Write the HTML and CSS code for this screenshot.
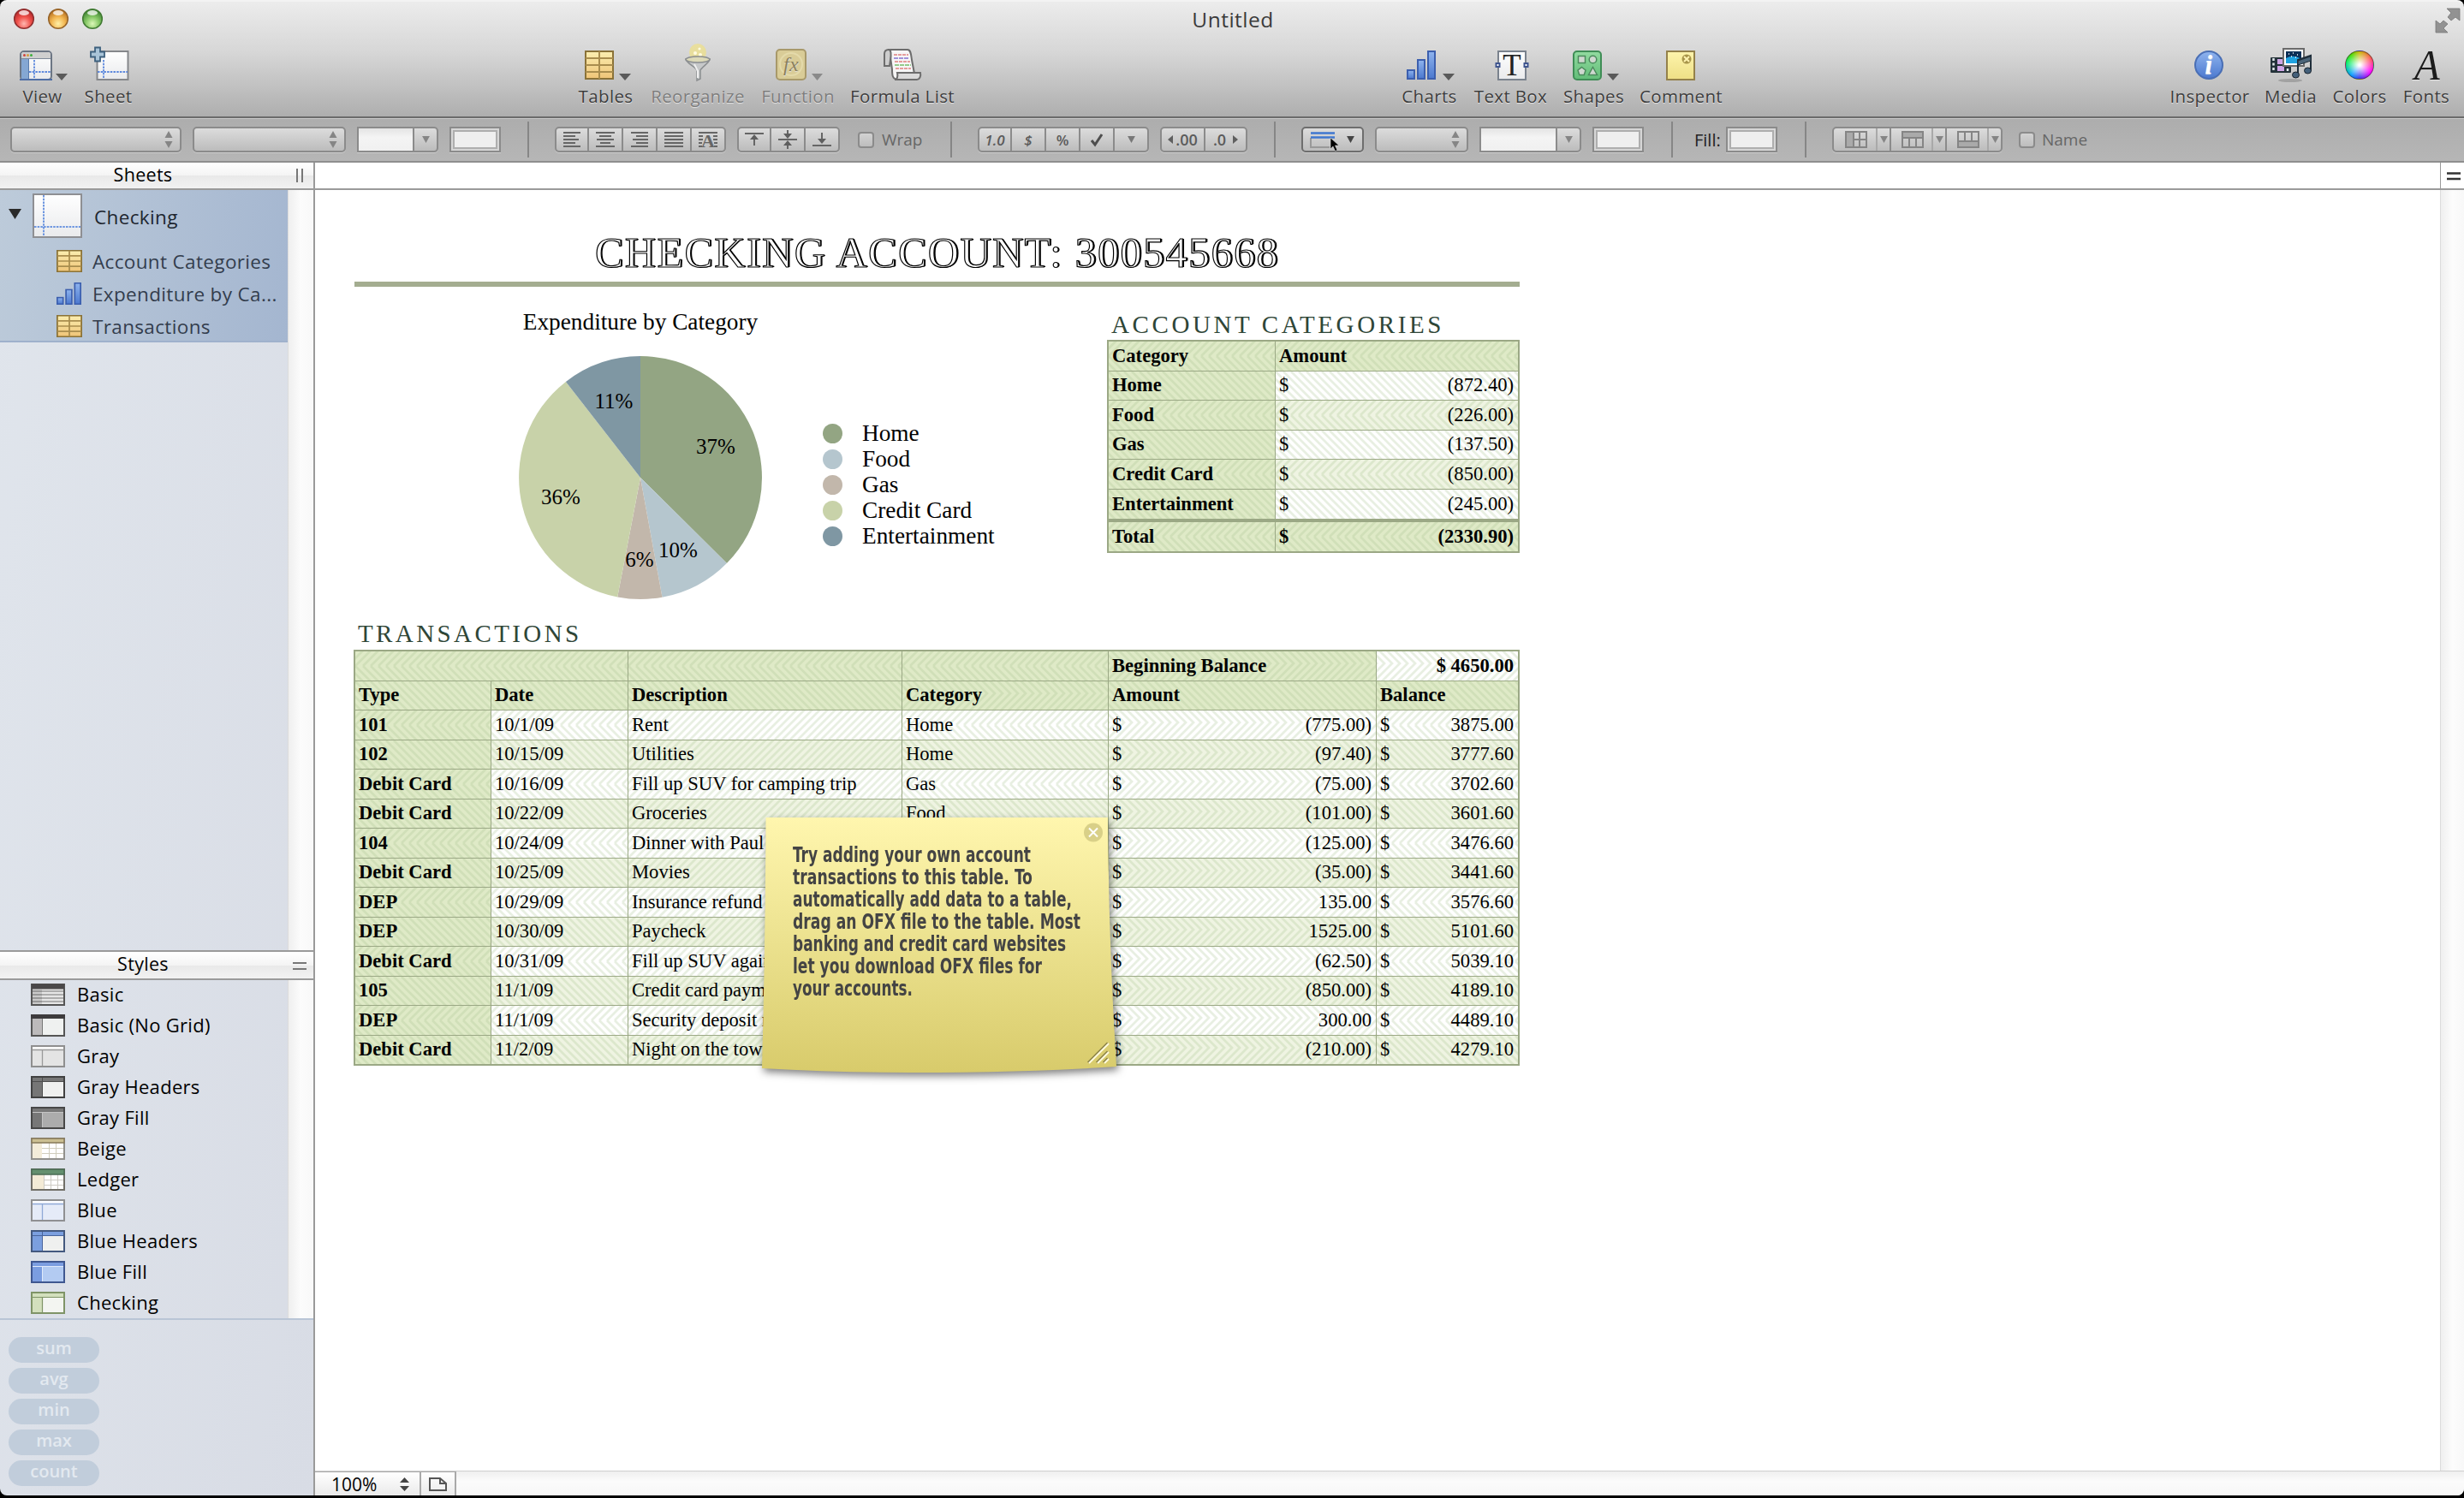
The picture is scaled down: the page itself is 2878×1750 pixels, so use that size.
FILE: index.html
```html
<!DOCTYPE html>
<html lang="en">
<head>
<meta charset="utf-8">
<title>Untitled</title>
<link rel="stylesheet" href="styles.css">
</head>
<body>
<svg class="defs" width="0" height="0" aria-hidden="true">
  <defs>
    <linearGradient id="gold" x1="0" y1="0" x2="0" y2="1"><stop offset="0" stop-color="#fbeeb0"/><stop offset="1" stop-color="#efc477"/></linearGradient>
    <linearGradient id="blue" x1="0" y1="0" x2="0" y2="1"><stop offset="0" stop-color="#8fb4ee"/><stop offset="1" stop-color="#4b78cf"/></linearGradient>
    <linearGradient id="green" x1="0" y1="0" x2="0" y2="1"><stop offset="0" stop-color="#92dba0"/><stop offset="1" stop-color="#62bd78"/></linearGradient>
    <linearGradient id="paper" x1="0" y1="0" x2="0" y2="1"><stop offset="0" stop-color="#ffffff"/><stop offset="1" stop-color="#e9eaec"/></linearGradient>
    <linearGradient id="noteIcon" x1="0" y1="0" x2="0" y2="1"><stop offset="0" stop-color="#fdf4ac"/><stop offset="1" stop-color="#eedf85"/></linearGradient>
    <linearGradient id="noteFill" x1="0" y1="0" x2="0" y2="1"><stop offset="0" stop-color="#fff6ae"/><stop offset=".45" stop-color="#ede391"/><stop offset="1" stop-color="#d8cb6b"/></linearGradient>
    <radialGradient id="red" cx=".5" cy=".75" r=".7"><stop offset="0" stop-color="#ffb7b0"/><stop offset=".5" stop-color="#f0524c"/><stop offset="1" stop-color="#b3272a"/></radialGradient>
    <radialGradient id="amber" cx=".5" cy=".75" r=".7"><stop offset="0" stop-color="#fff0a8"/><stop offset=".5" stop-color="#f2b651"/><stop offset="1" stop-color="#b8701f"/></radialGradient>
    <radialGradient id="lime" cx=".5" cy=".75" r=".7"><stop offset="0" stop-color="#dcf7b8"/><stop offset=".5" stop-color="#86c866"/><stop offset="1" stop-color="#3f8433"/></radialGradient>
    <symbol id="table" viewBox="0 0 34 34" preserveAspectRatio="none">
      <rect x="1" y="1" width="32" height="32" fill="url(#gold)" stroke="#8a7238" stroke-width="2"/>
      <path d="M17 1v32M1 9h32M1 17h32M1 25h32" stroke="#a98d4e" stroke-width="2"/>
    </symbol>
    <symbol id="bars" viewBox="0 0 34 34" preserveAspectRatio="none">
      <g fill="url(#blue)" stroke="#3c5fae" stroke-width="2"><rect x="1" y="23" width="8" height="10"/><rect x="13" y="11" width="8" height="22"/><rect x="25" y="1" width="8" height="32"/></g>
    </symbol>
    <symbol id="updown" viewBox="0 0 10 22"><path d="M5 1l4.5 8h-9zM5 21l4.5-8h-9z"/></symbol>
    <symbol id="down" viewBox="0 0 10 9"><path d="M0 0h10l-5 9z"/></symbol>
  </defs>
</svg>

<div class="window">
  <header class="chrome">
    <div class="titlebar">
      <svg class="lights" width="112" height="28" viewBox="0 0 112 28">
        <g stroke-width="1.5"><circle cx="16" cy="13" r="11.3" fill="url(#red)" stroke="#8f2f2f"/><circle cx="56" cy="13" r="11.3" fill="url(#amber)" stroke="#96642a"/><circle cx="96" cy="13" r="11.3" fill="url(#lime)" stroke="#417a33"/></g>
        <g fill="#fff" opacity=".75"><ellipse cx="16" cy="6" rx="6" ry="3"/><ellipse cx="56" cy="6" rx="6" ry="3"/><ellipse cx="96" cy="6" rx="6" ry="3"/></g>
      </svg>
      <div class="window-title">Untitled</div>
      <svg class="fullscreen" width="30" height="30" viewBox="0 0 30 30" fill="#929292"><path d="M14 1h15v14l-5-4-5 4-4-4 4-5zM1 15l5 4 4-4 5 4-5 5 5 5H1z" stroke="#777" stroke-width=".8"/></svg>
    </div>
    <nav class="toolbar">
      <div class="tools tools-file">
        <div class="tool w46">
          <svg width="46" height="48" viewBox="0 0 46 48"><rect x="-2" y="10" width="36" height="33" rx="4" fill="url(#paper)" stroke="#6c7684" stroke-width="2"/><path d="M-1 18v-4a3 3 0 0 1 3-3h28a3 3 0 0 1 3 3v4z" fill="#cfcfcf"/><path d="M-1 18.500h34" stroke="#7f8a99"/><circle cx="2.500" cy="14.500" r="1.500" fill="#d3443c"/><circle cx="6.500" cy="14.500" r="1.500" fill="#d39c3c"/><circle cx="10.500" cy="14.500" r="1.500" fill="#3caf3c"/><rect x="-1" y="19" width="8" height="23" fill="#84a7d3"/><path d="M7.500 19v23" stroke="#5a7bab"/><path d="M14 20v22M8 34h25" stroke="#5f8add" stroke-width="1.800" stroke-dasharray="2.500 1.200"/><path d="M-3 43h38" stroke="#4f6ea5" stroke-width="2"/><path d="M39 36h14l-7 8z" fill="#5a5a5a"/></svg>
          <span>View</span>
        </div>
        <div class="tool w52">
          <svg width="52" height="48" viewBox="0 0 52 48"><rect x="13.500" y="10" width="36" height="33" fill="url(#paper)" stroke="#85878b" stroke-width="2"/><path d="M21 20v22M14 34h35" stroke="#5f8add" stroke-width="1.800" stroke-dasharray="2.500 1.200"/><path d="M11 5.500h6v5h5v6h-5v5h-6v-5H6v-6h5z" fill="#a9c4d8" stroke="#3e617e" stroke-width="1.800"/></svg>
          <span>Sheet</span>
        </div>
      </div>
      <div class="tools tools-edit">
        <div class="tool w62">
          <svg width="62" height="48" viewBox="0 0 62 48"><use href="#table" x="7" y="9" width="34" height="34"/><path d="M47 36h14l-7 8z" fill="#5a5a5a"/></svg>
          <span>Tables</span>
        </div>
        <div class="tool w108 off">
          <svg width="108" height="48" viewBox="0 0 108 48"><ellipse cx="54" cy="11" rx="10" ry="10" fill="#eee08a" opacity=".75"/><g fill="#fffbe0"><circle cx="51" cy="12" r="2"/><circle cx="56" cy="7" r="1.600"/><circle cx="57" cy="14" r="2"/></g><path d="M40 19h28c-1 5-9 9-11 13v10l-4 2V32c-2-4-12-8-13-13z" fill="#c6c8c9" stroke="#8b8e90" stroke-width="1.500"/><ellipse cx="54" cy="19.500" rx="14" ry="3.500" fill="#dcd9b8" stroke="#8b8e90" stroke-width="1.500"/><path d="M50 25l4 8v8" stroke="#efefef" stroke-width="2" fill="none"/></svg>
          <span>Reorganize</span>
        </div>
        <div class="tool w81 off">
          <svg width="81" height="48" viewBox="0 0 81 48"><rect x="16" y="8" width="34" height="35" rx="4" fill="#d9cc97" stroke="#a8996a" stroke-width="2"/><ellipse cx="33" cy="25" rx="13" ry="13" fill="none" stroke="#e4daaa" stroke-width="2"/><text x="33" y="33" text-anchor="middle" class="fx">fx</text><path d="M57 36h13l-6.500 8z" fill="#8a8a8a"/></svg>
          <span>Function</span>
        </div>
        <div class="tool w118">
          <svg width="118" height="48" viewBox="0 0 118 48"><path d="M43 8h22c4 0 4 6 5 12l3 16-3 7H54c-7 0-7-6-7-12l-2-14z" fill="#f6f6f6" stroke="#6d6d6d" stroke-width="2"/><path d="M44 27h-6V13c0-4 3-5 5-5 3 0 3 6 2 12z" fill="#cdcdcd" stroke="#6d6d6d" stroke-width="2"/><path d="M53 35h27c1 4-1 8-4 8H50c3 0 4-4 3-8z" fill="#dadada" stroke="#6d6d6d" stroke-width="2"/><path d="M49 14h17M50 22h18M51 30h18" stroke="#e08080" stroke-width="1.600" stroke-dasharray="4 1"/><path d="M49 18h18" stroke="#8573cf" stroke-width="1.600" stroke-dasharray="5 1"/><path d="M50 26h19" stroke="#74bd6a" stroke-width="1.600" stroke-dasharray="5 1"/></svg>
          <span>Formula List</span>
        </div>
      </div>
      <div class="tools tools-insert">
        <div class="tool w62">
          <svg width="62" height="48" viewBox="0 0 62 48"><use href="#bars" x="5" y="9" width="34" height="34"/><path d="M47 36h14l-7 8z" fill="#5a5a5a"/></svg>
          <span>Charts</span>
        </div>
        <div class="tool w84">
          <svg width="84" height="48" viewBox="0 0 84 48"><rect x="28" y="10" width="32" height="33" fill="url(#paper)" stroke="#7a828d" stroke-width="2"/><text x="44" y="38" text-anchor="middle" class="big-t">T</text><g fill="#fff" stroke="#3f558f" stroke-width="2"><rect x="25.500" y="24" width="4" height="4"/><rect x="58.500" y="24" width="4" height="4"/></g></svg>
          <span>Text Box</span>
        </div>
        <div class="tool w66">
          <svg width="66" height="48" viewBox="0 0 66 48"><rect x="10" y="10" width="32" height="33" rx="4" fill="url(#green)" stroke="#3f8d56" stroke-width="2"/><g fill="#cfd8d0" stroke="#4b8a5c" stroke-width="1.500"><rect x="15.500" y="15.500" width="8" height="8"/><circle cx="32.500" cy="19.500" r="4.300"/><path d="M19.500 28.500l4.500 3.500-1.700 5.500h-5.600L15 32zM32.500 28.500l5 9h-10z"/></g><path d="M49 36h14l-7 8z" fill="#5a5a5a"/></svg>
          <span>Shapes</span>
        </div>
        <div class="tool w94">
          <svg width="94" height="48" viewBox="0 0 94 48"><rect x="31" y="10" width="32" height="33" fill="url(#noteIcon)" stroke="#94814a" stroke-width="2"/><circle cx="54" cy="19" r="5.500" fill="#a8954a"/><path d="M51 16l6 6M57 16l-6 6" stroke="#fff3b0" stroke-width="2"/></svg>
          <span>Comment</span>
        </div>
      </div>
      <div class="tools tools-panels">
        <div class="tool w89">
          <svg width="89" height="48" viewBox="0 0 89 48"><circle cx="44" cy="26" r="16" fill="url(#blue)" stroke="#4a6fb5" stroke-width="2"/><text x="44" y="36" text-anchor="middle" class="info">i</text></svg>
          <span>Inspector</span>
        </div>
        <div class="tool w56">
          <svg width="56" height="48" viewBox="0 0 56 48"><ellipse cx="28" cy="44" rx="14" ry="2" fill="#8b8b8b" opacity=".6"/><rect x="5" y="17" width="24" height="18" rx="1" fill="#24323a"/><path d="M8.500 18v16M25 30v4" stroke="#dfe7ea" stroke-width="2.500" stroke-dasharray="3 2.500"/><path d="M13 19h8v6h-8zM13 27h8v6h-8z" fill="#cfa6e6"/><rect x="20" y="7" width="24" height="20" fill="#fff" stroke="#6b6b6b" stroke-width="2"/><rect x="23" y="10" width="18" height="14" fill="#0c2f57"/><path d="M23 18q9-5 18 1v5H23z" fill="#20a3e0"/><path d="M26 13h1M31 12h1M36 14h1M29 16h1M34 17h1" stroke="#fff" stroke-width="1.500"/><path d="M37 38V20l15-5v18" fill="none" stroke="#1f2d39" stroke-width="2"/><path d="M37 21l15-5v5l-15 5z" fill="#4b6478" stroke="#1f2d39"/><ellipse cx="34.500" cy="37.500" rx="4" ry="3.500" fill="#44607a" stroke="#16212b"/><ellipse cx="48.500" cy="32.500" rx="4" ry="3.500" fill="#44607a" stroke="#16212b"/></svg>
          <span>Media</span>
        </div>
        <div class="tool w61">
          <i class="wheel"></i>
          <span>Colors</span>
        </div>
        <div class="tool w51">
          <svg width="51" height="48" viewBox="0 0 51 48"><text x="12" y="43" textLength="30" lengthAdjust="spacingAndGlyphs" class="big-a">A</text></svg>
          <span>Fonts</span>
        </div>
      </div>
    </nav>
  </header>

  <div class="formatbar">
    <div class="fgroup g1">
      <div class="popup p199"><svg width="10" height="22"><use href="#updown"/></svg></div>
      <div class="popup p179"><svg width="10" height="22"><use href="#updown"/></svg></div>
      <div class="combo p95"><b></b><em><svg width="9" height="8"><use href="#down"/></svg></em></div>
      <div class="well"></div>
    </div>
    <div class="fgroup g2">
      <div class="seg">
        <i><svg width="24" height="22"><path d="M2 3h20M2 7h14M2 11h18M2 15h14M2 19h20"/></svg></i>
        <i><svg width="24" height="22"><path d="M1 3h22M5 7h14M2 11h20M6 15h12M1 19h22"/></svg></i>
        <i><svg width="24" height="22"><path d="M2 3h20M8 7h14M4 11h18M8 15h14M2 19h20"/></svg></i>
        <i><svg width="24" height="22"><path d="M1 3h22M1 7h22M1 11h22M1 15h22M1 19h22"/></svg></i>
        <i><svg width="24" height="22"><path d="M1 3h22M1 7h5M18 7h5M1 11h5M18 11h5M1 15h4M19 15h4M1 19h4M19 19h4"/><text x="12" y="20" text-anchor="middle">A</text></svg></i>
      </div>
      <div class="seg">
        <i><svg width="24" height="22"><path d="M1 4h22M12 18v-9"/><path class="f" d="M12 5l5 6h-10z"/></svg></i>
        <i><svg width="24" height="22"><path d="M1 11h22M12 0v6M12 22v-6"/><path class="f" d="M12 10l5-6h-10zM12 12l5 6h-10z"/></svg></i>
        <i><svg width="24" height="22"><path d="M1 18h22M12 3v8"/><path class="f" d="M12 16l5-6h-10z"/></svg></i>
      </div>
      <label class="check"><i></i>Wrap</label>
    </div>
    <div class="fgroup g3">
      <div class="seg glyphs">
        <i class="it">1.0</i><i class="it">$</i><i>%</i><i><svg width="18" height="18"><path class="k" d="M3 10l4 5 8-12"/></svg></i><i><svg width="9" height="8"><use href="#down"/></svg></i>
      </div>
      <div class="seg glyphs wide">
        <i><svg width="6" height="10"><path class="f" d="M6 0v10l-6-5z"/></svg>.00</i><i>.0<svg class="r" width="6" height="10"><path class="f" d="M0 0v10l6-5z"/></svg></i>
      </div>
    </div>
    <div class="fgroup g4">
      <div class="popup live"><svg width="30" height="20"><path d="M1 8v11h22" stroke="#999" stroke-width="2" fill="none"/><path d="M1 2.500h28M1 7.500h28" stroke="#3f77cf" stroke-width="2.600"/></svg><svg class="tri" width="9" height="8"><use href="#down"/></svg>
        <svg class="cursor" width="12" height="16" viewBox="0 0 12 16"><path d="M1 0v13l3-3 2.500 5.500 2.500-1L6.500 9H11z" fill="#000" stroke="#ddd" stroke-width=".6"/></svg></div>
      <div class="popup p109"><svg width="10" height="22"><use href="#updown"/></svg></div>
      <div class="combo p119"><b></b><em><svg width="9" height="8"><use href="#down"/></svg></em></div>
      <div class="well"></div>
    </div>
    <div class="fgroup g5"><span class="fill-label">Fill:</span><div class="well"></div></div>
    <div class="fgroup g6">
      <div class="seg tables">
        <i><svg width="26" height="20"><path class="g" d="M1 1h9v18H1z"/><path d="M1 1h24v18H1zM10 1v18M17 1v18M10 10h15"/></svg></i><u><svg width="9" height="8"><use href="#down"/></svg></u>
        <i><svg width="26" height="20"><path class="g" d="M1 1h24v7H1z"/><path d="M1 1h24v18H1zM1 8h24M9 8v11M17 8v11"/></svg></i><u><svg width="9" height="8"><use href="#down"/></svg></u>
        <i><svg width="26" height="20"><path class="g" d="M1 12h24v7H1z"/><path d="M1 1h24v18H1zM1 12h24M9 1v11M17 1v11"/></svg></i><u><svg width="9" height="8"><use href="#down"/></svg></u>
      </div>
      <label class="check name"><i></i>Name</label>
    </div>
  </div>

  <div class="content">
    <aside class="sidebar">
      <div class="pane-head">Sheets<svg class="grip" width="8" height="16"><path d="M1 0v16M7 0v16"/></svg></div>
      <div class="pane sheets">
        <div class="list">
          <ul class="tree">
            <li class="root"><svg width="110" height="66" viewBox="0 0 110 66"><path d="M10 24h15l-7.500 12z" fill="#2a2a2a"/><rect x="39" y="7" width="56" height="50" fill="url(#paper)" stroke="#8e8f93" stroke-width="2"/><path d="M51 8v48M40 45h54" stroke="#6f97e0" stroke-width="2" stroke-dasharray="2.500 1.200"/></svg>Checking</li>
            <li><svg width="30" height="26"><use href="#table" width="30" height="26"/></svg>Account Categories</li>
            <li><svg width="30" height="26"><use href="#bars" width="29" height="26"/></svg>Expenditure by Ca...</li>
            <li><svg width="30" height="26"><use href="#table" width="30" height="26"/></svg>Transactions</li>
          </ul>
        </div>
        <div class="vscroll"></div>
      </div>
      <div class="pane-head second">Styles<svg class="grip" width="16" height="9"><path d="M0 1h16M0 8h16"/></svg></div>
      <div class="pane styles">
        <ul class="list stylelist">
          <li><svg width="40" height="26"><rect x="1" y="1" width="38" height="24" fill="#e6e6e6" stroke="#555" stroke-width="2"/><path d="M1 3.500h38" stroke="#4a4849" stroke-width="6"/><path d="M2 9h36M2 13h36M2 17h36M2 21h36" stroke="#9b9b9b" stroke-width="1.500"/><path d="M2 7h11v17H2z" fill="#000" opacity=".12"/></svg>Basic</li>
          <li><svg width="40" height="26"><rect x="1" y="1" width="38" height="24" fill="#eff1f0" stroke="#555" stroke-width="2"/><path d="M2 5h11v19H2z" fill="#bcbabb"/><path d="M13.500 5v19" stroke="#777"/><path d="M0 2.500h40" stroke="#3d3b3d" stroke-width="5"/></svg>Basic (No Grid)</li>
          <li><svg width="40" height="26"><rect x="1" y="1" width="38" height="24" fill="#e4e4e4" stroke="#8f8f8f" stroke-width="2"/><path d="M2 2h36v3H2z" fill="#fafafa"/><path d="M2 5.500h36M13.500 5v19" stroke="#9a9a9a" stroke-width="1.300"/></svg>Gray</li>
          <li><svg width="40" height="26"><rect x="1" y="1" width="38" height="24" fill="#eff0ef" stroke="#414141" stroke-width="2"/><path d="M2 2h36v5H13v17H2z" fill="#767676"/><path d="M2 6.500h36M13.500 2v22" stroke="#4d4d4d" stroke-width="1"/></svg>Gray Headers</li>
          <li><svg width="40" height="26"><rect x="1" y="1" width="38" height="24" fill="#acacac" stroke="#474747" stroke-width="2"/><path d="M2 2h36v4H13v18H2z" fill="#777"/><path d="M2 6.500h36M13.500 6v18" stroke="#c4c4c4" stroke-width="1"/></svg>Gray Fill</li>
          <li><svg width="40" height="26"><rect x="1" y="1" width="38" height="24" fill="#fff" stroke="#91908c" stroke-width="2"/><path d="M2 6h11v18H2z" fill="#f3ecd9"/><path d="M13 12.500h25M13 18.500h25M21.500 6v18M29.500 6v18" stroke="#d0cdbd" stroke-width="1"/><path d="M1 1h38v5H1z" fill="#cbbf92" stroke="#87795a" stroke-width="1.500"/></svg>Beige</li>
          <li><svg width="40" height="26"><rect x="1" y="1" width="38" height="24" fill="#fff" stroke="#716f68" stroke-width="2"/><path d="M2 7h13v17H2z" fill="#f3ebd6"/><path d="M15 13.500h23M15 19.500h23M15.500 7v17M23.500 7v17M31.500 7v17" stroke="#cdcbc4" stroke-width="1"/><path d="M1 1h38v6H1z" fill="#64906f" stroke="#4a6b54" stroke-width="1.500"/></svg>Ledger</li>
          <li><svg width="40" height="26"><rect x="1" y="1" width="38" height="24" fill="#e5ebf8" stroke="#8f9092" stroke-width="2"/><path d="M2 2h36v3H2z" fill="#fafcff"/><path d="M2 5.500h36M13.500 5v19" stroke="#8fa9d6" stroke-width="1.300"/></svg>Blue</li>
          <li><svg width="40" height="26"><rect x="1" y="1" width="38" height="24" fill="#eff0ef" stroke="#44597f" stroke-width="2"/><path d="M2 2h36v5H13v17H2z" fill="#7b9fdf"/><path d="M2 6.500h36M13.500 2v22" stroke="#49659c" stroke-width="1"/></svg>Blue Headers</li>
          <li><svg width="40" height="26"><rect x="1" y="1" width="38" height="24" fill="#b3cbf2" stroke="#3f5790" stroke-width="2"/><path d="M2 2h36v4H13v18H2z" fill="#7b9de0"/><path d="M2 6.500h36M13.500 6v18" stroke="#e0eafb" stroke-width="1"/></svg>Blue Fill</li>
          <li><svg width="40" height="26"><rect x="1" y="1" width="38" height="24" fill="#f3f5f1" stroke="#7f9467" stroke-width="2"/><path d="M2 2h36v5H13v17H2z" fill="#d3e0bd"/><path d="M2 6.500h36M13.500 7v17" stroke="#7f9467" stroke-width="1.200"/></svg>Checking</li>
        </ul>
        <div class="vscroll"></div>
      </div>
      <div class="functions"><span>sum</span><span>avg</span><span>min</span><span>max</span><span>count</span></div>
    </aside>

    <main class="editor">
      <div class="ruler"><div class="splitter"><svg width="16" height="10"><path d="M0 1.500h16M0 8h16"/></svg></div></div>
      <div class="viewport">
        <article class="canvas">
          <h1>CHECKING ACCOUNT: 300545668</h1>
          <div class="overview">
            <figure class="chart">
              <div class="pie">
                <figcaption>Expenditure by Category</figcaption>
                <svg width="284" height="284" viewBox="-142 -142 284 284">
                  <path fill="#93a583" d="M0 0V-142A142 142 0 0 1 100.900 99.900z"/>
                  <path fill="#b5c6ce" d="M0 0L100.900 99.900A142 142 0 0 1 25.500 139.700z"/>
                  <path fill="#c2b7ab" d="M0 0L25.500 139.700A142 142 0 0 1-26.800 139.400z"/>
                  <path fill="#c8d2a9" d="M0 0L-26.800 139.400A142 142 0 0 1-87.100-112.100z"/>
                  <path fill="#7f97a3" d="M0 0L-87.100-112.100A142 142 0 0 1 0-142z"/>
                  <g text-anchor="middle"><text x="88" y="-28">37%</text><text x="44" y="93">10%</text><text x="-1" y="104">6%</text><text x="-93" y="31">36%</text><text x="-31" y="-81">11%</text></g>
                </svg>
              </div>
              <ul class="legend"><li class="home">Home</li><li class="food">Food</li><li class="gas">Gas</li><li class="credit">Credit Card</li><li class="fun">Entertainment</li></ul>
            </figure>
            <section>
              <h2>ACCOUNT CATEGORIES</h2>
              <table class="accounts">
                <colgroup><col class="c195"><col class="c283"></colgroup>
                <tr><th>Category</th><th>Amount</th></tr>
                <tr><th>Home</th><td><p>$<span>(872.40)</span></p></td></tr>
                <tr><th>Food</th><td><p>$<span>(226.00)</span></p></td></tr>
                <tr><th>Gas</th><td><p>$<span>(137.50)</span></p></td></tr>
                <tr><th>Credit Card</th><td><p>$<span>(850.00)</span></p></td></tr>
                <tr><th>Entertainment</th><td><p>$<span>(245.00)</span></p></td></tr>
                <tr class="total"><th>Total</th><th><p>$<span>(2330.90)</span></p></th></tr>
              </table>
            </section>
          </div>
          <h2 class="tx">TRANSACTIONS</h2>
          <table class="transactions">
            <colgroup><col class="c159"><col class="c160"><col class="c320"><col class="c241"><col class="c313"><col class="c166"></colgroup>
            <tr><th colspan="2"></th><th></th><th></th><th>Beginning Balance</th><td class="start">$ 4650.00</td></tr>
            <tr><th>Type</th><th>Date</th><th>Description</th><th>Category</th><th>Amount</th><th>Balance</th></tr>
            <tr><th>101</th><td>10/1/09</td><td>Rent</td><td>Home</td><td><p>$<span>(775.00)</span></p></td><td><p>$<span>3875.00</span></p></td></tr>
            <tr><th>102</th><td>10/15/09</td><td>Utilities</td><td>Home</td><td><p>$<span>(97.40)</span></p></td><td><p>$<span>3777.60</span></p></td></tr>
            <tr><th>Debit Card</th><td>10/16/09</td><td>Fill up SUV for camping trip</td><td>Gas</td><td><p>$<span>(75.00)</span></p></td><td><p>$<span>3702.60</span></p></td></tr>
            <tr><th>Debit Card</th><td>10/22/09</td><td>Groceries</td><td>Food</td><td><p>$<span>(101.00)</span></p></td><td><p>$<span>3601.60</span></p></td></tr>
            <tr><th>104</th><td>10/24/09</td><td>Dinner with Paul</td><td></td><td><p>$<span>(125.00)</span></p></td><td><p>$<span>3476.60</span></p></td></tr>
            <tr><th>Debit Card</th><td>10/25/09</td><td>Movies</td><td></td><td><p>$<span>(35.00)</span></p></td><td><p>$<span>3441.60</span></p></td></tr>
            <tr><th>DEP</th><td>10/29/09</td><td>Insurance refund</td><td></td><td><p>$<span>135.00</span></p></td><td><p>$<span>3576.60</span></p></td></tr>
            <tr><th>DEP</th><td>10/30/09</td><td>Paycheck</td><td></td><td><p>$<span>1525.00</span></p></td><td><p>$<span>5101.60</span></p></td></tr>
            <tr><th>Debit Card</th><td>10/31/09</td><td>Fill up SUV again</td><td></td><td><p>$<span>(62.50)</span></p></td><td><p>$<span>5039.10</span></p></td></tr>
            <tr><th>105</th><td>11/1/09</td><td>Credit card payment</td><td></td><td><p>$<span>(850.00)</span></p></td><td><p>$<span>4189.10</span></p></td></tr>
            <tr><th>DEP</th><td>11/1/09</td><td>Security deposit refund</td><td></td><td><p>$<span>300.00</span></p></td><td><p>$<span>4489.10</span></p></td></tr>
            <tr><th>Debit Card</th><td>11/2/09</td><td>Night on the town</td><td></td><td><p>$<span>(210.00)</span></p></td><td><p>$<span>4279.10</span></p></td></tr>
          </table>
          <svg class="note" width="416" height="302" viewBox="0 0 416 302">
            <path d="M4.500 0H404q1 150 10 291-100 7-240 7-90 0-174-5 4-150 4.500-293z" fill="url(#noteFill)"/>
            <circle cx="387" cy="17.500" r="11" fill="#d9d088"/><path d="M382 12.500l10 10M392 12.500l-10 10" stroke="#fff" stroke-width="2"/>
            <g>
              <text x="36" y="52" textLength="278" lengthAdjust="spacingAndGlyphs">Try adding your own account</text>
              <text x="36" y="78" textLength="280" lengthAdjust="spacingAndGlyphs">transactions to this table. To</text>
              <text x="36" y="104" textLength="326" lengthAdjust="spacingAndGlyphs">automatically add data to a table,</text>
              <text x="36" y="130" textLength="336" lengthAdjust="spacingAndGlyphs">drag an OFX file to the table. Most</text>
              <text x="36" y="156" textLength="319" lengthAdjust="spacingAndGlyphs">banking and credit card websites</text>
              <text x="36" y="182" textLength="291" lengthAdjust="spacingAndGlyphs">let you download OFX files for</text>
              <text x="36" y="208" textLength="140" lengthAdjust="spacingAndGlyphs">your accounts.</text>
            </g>
            <path d="M382 287l23-23M392 287l13-13M400 287l5-5" stroke="#fffbe2" stroke-width="2"/><path d="M380.500 286l23-23M390.500 286l13-13M398.500 286l5-5" stroke="#8b834b" stroke-width="1.500"/>
          </svg>
        </article>
        <div class="vscroll page"></div>
      </div>
      <footer class="status">
        <div class="zoom"><span>100%</span><svg width="11" height="16" viewBox="0 0 11 16"><path d="M5.500 0l5.500 6H0zM5.500 16l5.500-6H0z"/></svg></div>
        <div class="pageview"><svg width="21" height="16" viewBox="0 0 21 16"><path d="M1 1h12l7 6v8H1zM13 1v6h7" fill="none" stroke="#555" stroke-width="2"/></svg></div>
        <div class="hscroll"></div>
      </footer>
    </main>
  </div>
</div>
</body>
</html>
```

FILE: styles.css
```css
* { box-sizing: border-box; }
body { margin: 0; background: #000; font-family: "Open Sans", "Noto Sans", sans-serif; font-size: 22px; color: #000; }
ul, p, h1, h2, figure { margin: 0; padding: 0; list-style: none; }
svg { display: block; flex: none; overflow: visible; }
.defs { position: absolute; }
.window { width: 2878px; height: 1750px; display: flex; flex-direction: column; padding-bottom: 3px; overflow: hidden; }

/* Title bar and toolbar */
.chrome { height: 138px; background: linear-gradient(#ececec, #d6d6d6 45%, #aeaeae); border-top: 2px solid #f3f3f3; border-bottom: 2px solid #6b6b6b; border-radius: 8px 8px 0 0; }
.titlebar { height: 48px; padding: 7px 4px 0 12px; display: flex; }
.window-title { flex: 1; padding-right: 88px; margin-top: -1px; font-size: 24.5px; line-height: 30px; letter-spacing: .5px; color: #3b3b3b; text-align: center; }
.toolbar { display: flex; height: 86px; }
.tools { display: flex; gap: 22px; }
.tools-file { gap: 28px; padding-left: 26px; width: 676px; }
.tools-edit { width: 962px; }
.tools-insert { width: 898px; }
.tool { display: flex; flex-direction: column; align-items: center; color: #3d3d3d; font-size: 20.5px; white-space: nowrap; text-shadow: 0 1px 1px #e6e6e6; letter-spacing: .35px; }
.tool span { line-height: 28px; padding-left: 1px; }
.tool.off { color: #7d7d7d; }
.w46 { width: 46px; } .w51 { width: 51px; } .w52 { width: 52px; } .w56 { width: 56px; } .w61 { width: 61px; } .w62 { width: 62px; } .w66 { width: 66px; }
.w81 { width: 81px; } .w84 { width: 84px; } .w89 { width: 89px; } .w94 { width: 94px; } .w108 { width: 109px; } .w118 { width: 119px; }
.fx { font: italic 24px "Liberation Serif", serif; fill: #8b805a; }
.big-t { font: 35px "Liberation Serif", serif; fill: #222; }
.info { font: italic bold 31px "Liberation Serif", serif; fill: #fff; }
.big-a { font: italic 51px "Liberation Serif", serif; fill: #1c1c1c; }
.wheel { width: 34px; height: 34px; margin: 9px 0 5px; border-radius: 50%; border: 1.5px solid rgba(60,40,40,.55); background: radial-gradient(circle, #fff 5%, rgba(255,255,255,0) 70%), conic-gradient(#c8b400, #f55 60deg, #f0f 120deg, #33e 180deg, #09f 220deg, #0e6 280deg, #4d0 320deg, #c8b400); }

/* Format bar */
.formatbar { height: 52px; display: flex; background: linear-gradient(#adadad, #b6b6b6); border-top: 1px solid #c9c9c9; border-bottom: 2px solid #8e8e8e; }
.fgroup { display: flex; gap: 13px; align-items: center; padding-bottom: 1px; }
.fgroup + .fgroup::before { content: ""; align-self: center; width: 2px; height: 42px; background: #868686; margin-right: 17px; }
.g1 { width: 616px; padding-left: 12px; }
.g2 { width: 494px; }
.g3 { width: 378px; }
.g4 { width: 464px; }
.g5 { width: 156px; }
.popup, .combo, .seg, .well { height: 30px; border: 2px solid #8b8b8b; border-radius: 5px; background: linear-gradient(#dcdcdc, #bcbcbc); box-shadow: 0 1px 0 #cdcdcd; display: flex; align-items: center; flex: none; }
.popup { justify-content: flex-end; padding-right: 8px; fill: #858585; }
.p199 { width: 200px; } .p179 { width: 179px; } .p95 { width: 95px; } .p109 { width: 109px; } .p119 { width: 119px; }
.combo { border-radius: 0 5px 5px 0; align-items: stretch; }
.combo b { flex: 1; background: linear-gradient(#e4e4e4, #f4f4f4 40%, #f0f0f0); }
.combo em { width: 28px; border-left: 2px solid #8b8b8b; display: flex; align-items: center; justify-content: center; fill: #858585; }
.well { width: 60px; border-radius: 0; background: #efefef; box-shadow: inset 0 0 0 2px #d6d6d6, inset 0 0 0 4px #aeaeae, 0 1px 0 #cdcdcd; }
.seg { align-items: stretch; overflow: hidden; }
.seg i { width: 40px; display: flex; align-items: center; justify-content: center; font-style: normal; color: #5b5b5b; fill: #777; }
.seg i:first-child { width: 36px; }
.seg i + i, .seg u + i { border-left: 2px solid #8b8b8b; }
.seg path { stroke: #666; stroke-width: 2; fill: none; }
.seg path.f { fill: #5f5f5f; stroke: none; }
.seg path.k { stroke: #4e4e4e; stroke-width: 3; }
.seg text { font: bold 22px "Liberation Serif", serif; fill: #666; }
.glyphs i { font-size: 17px; font-weight: 600; gap: 3px; }
.glyphs .it { font-style: italic; }
.glyphs.wide i, .glyphs.wide i:first-child { width: 49px; font-size: 18px; }
.glyphs.wide .r { margin-left: 5px; }
.g4 .live { width: 73px; border-color: #6e6e6e; fill: #444; justify-content: space-between; padding: 0 9px 0 8px; position: relative; }
.cursor { position: absolute; left: 31px; top: 11px; }
.check { display: flex; align-items: center; gap: 9px; font-size: 19px; color: #666; margin-left: 8px; }
.check.name { margin-left: 6px; gap: 8px; }
.check i { width: 19px; height: 19px; border: 2px solid #8b8b8b; border-radius: 4px; background: linear-gradient(#d2d2d2, #bdbdbd); }
.fill-label { font-size: 20px; color: #222; margin: 0 -11px 0 -5px; width: 35px; }
.seg.tables i, .seg.tables i:first-child { width: 49px; }
.seg.tables u { width: 16px; border-left: 2px solid #a9a9a9; display: flex; align-items: center; justify-content: center; fill: #858585; }
.seg.tables path { stroke: #858585; }
.seg.tables path.g { fill: #aaa; stroke: none; }
.seg use, .seg.tables u use { stroke-width: 0; }
.seg.tables i svg { margin-left: 2px; }

/* Sidebar */
.content { flex: 1; display: flex; min-height: 0; }
.sidebar { width: 368px; border-right: 2px solid #9a9a9a; display: flex; flex-direction: column; background: linear-gradient(100deg, #e0e5ec, #d8dce5); border-radius: 0 0 0 8px; overflow: hidden; }
.pane-head { height: 32px; padding-right: 32px; position: relative; text-align: center; font-size: 21.5px; line-height: 27px; letter-spacing: .3px; background: linear-gradient(#fff, #f4f4f4 50%, #e9e9e9 51%, #f2f2f2); border-bottom: 2px solid #9a9a9a; }
.pane-head.second { height: 35px; border-top: 2px solid #9a9a9a; line-height: 28px; }
.grip { position: absolute; right: 12px; top: 7px; stroke: #777; stroke-width: 2; }
.second .grip { right: 8px; top: 12px; }
.pane { display: flex; }
.sheets { height: 888px; }
.styles { height: 397px; border-bottom: 2px solid #b9c5d6; }
.list { width: 336px; }
.vscroll { width: 30px; border-left: 1px solid #dcdcdc; background: linear-gradient(90deg, #efefef, #fcfcfc 50%, #f8f8f8); }
.tree { height: 178px; background: linear-gradient(100deg, #bdcbda, #a4b6d0); border-bottom: 2px solid #9fb1cc; color: #333d4d; }
.tree li { display: flex; align-items: center; gap: 12px; height: 38px; padding-left: 66px; white-space: nowrap; font-size: 22.5px; letter-spacing: .35px; }
.tree .root { height: 64px; padding: 0 0 2px; gap: 0; color: #20262f; }
.stylelist li { display: flex; align-items: center; gap: 14px; height: 36px; padding: 0 0 4px 36px; font-size: 22px; letter-spacing: .3px; }
.stylelist li svg { margin-top: 1px; }
.functions { padding: 20px 0 0 10px; display: flex; flex-direction: column; gap: 6px; }
.functions span { width: 106px; height: 30px; border-radius: 15px; background: #c1cddb; color: #e3e9f0; font-size: 20px; font-weight: 600; line-height: 25px; text-align: center; }

/* Editor */
.editor { flex: 1; display: flex; flex-direction: column; background: #fff; min-width: 0; border-radius: 0 0 8px 0; overflow: hidden; }
.ruler { height: 32px; border-bottom: 2px solid #9a9a9a; display: flex; justify-content: flex-end; }
.splitter { width: 28px; border-left: 1px solid #9a9a9a; padding: 11px 0 0 7px; stroke: #333; stroke-width: 2.500; }
.viewport { flex: 1; display: flex; min-height: 0; }
.canvas { flex: 1; padding-left: 45px; position: relative; font-family: "Liberation Serif", serif; }
.vscroll.page { width: 28px; }
h1 { width: 1361px; margin-left: 1px; padding-top: 40px; height: 113px; line-height: 66px; font-size: 50px; font-weight: 400; letter-spacing: 1.5px; text-align: center; border-bottom: 6px solid #a4ad90; color: #fff; -webkit-text-stroke: 1.2px #000; text-shadow: 1.6px 0 0 #000; white-space: nowrap; }
h2 { font-size: 29px; font-weight: 400; letter-spacing: 3.6px; line-height: 36px; color: #2f4637; padding-left: 5px; margin-top: 26px; white-space: nowrap; }
h2.tx { margin: 0; line-height: 38px; letter-spacing: 3.4px; }
.overview { display: grid; grid-template-columns: 880px 482px; height: 386px; }
.chart { display: flex; font-size: 27.3px; }
.pie { margin: 26px 0 0 193px; width: 284px; }
figcaption { line-height: 30px; margin-bottom: 25px; text-align: center; white-space: nowrap; }
.pie text { font-size: 25px; }
.legend { margin: 156px 0 0 71px; }
.legend li { display: flex; align-items: center; gap: 23px; height: 30.1px; line-height: 30px; white-space: nowrap; }
.legend li::before { content: ""; width: 23px; height: 23px; border-radius: 50%; background: var(--c); }
.home { --c: #93a583; } .food { --c: #b5c6ce; } .gas { --c: #c2b7ab; } .credit { --c: #c8d2a9; } .fun { --c: #7f97a3; }

table { border: 2px solid #9ba885; border-spacing: 0; table-layout: fixed; font-size: 22.6px; line-height: 26px; }
.accounts { width: 482px; }
.transactions { width: 1362px; }
.c159 { width: 159px; } .c160 { width: 160px; } .c166 { width: 165px; } .c195 { width: 195px; } .c241 { width: 241px; } .c283 { width: 283px; } .c313 { width: 313px; } .c320 { width: 320px; }
td, th {
  --chevrons: url("data:image/svg+xml,%3Csvg xmlns='http://www.w3.org/2000/svg' width='36' height='72'%3E%3Cpath d='M-36 0l36 36-36 36M-27 0l36 36-36 36M-18 0l36 36-36 36M-9 0l36 36-36 36M0 0l36 36-36 36M9 0l36 36-36 36M18 0l36 36-36 36M27 0l36 36-36 36M36 0l36 36-36 36' fill='none' stroke='%23a5bf8c' stroke-opacity='.25' stroke-width='2.800'/%3E%3C/svg%3E");
  height: 34px; padding: 0 5px 1px 4px; text-align: left; vertical-align: middle; border: 0 solid #9ba885; border-width: 0 1px 1px 0; white-space: nowrap; overflow: hidden; background: #fff var(--chevrons);
}
tr:nth-child(odd) > * { height: 35px; background-position-y: 17px; }
th { background-color: #dfeac7; font-weight: 700; }
td:nth-child(3) { background-position-y: 34px; }
td:nth-child(5), th:nth-child(4) { background-position-y: 50px; }
.transactions tr:nth-child(even) td, .accounts tr:nth-child(odd) td { background-color: #eff4e2; }
tr > :last-child { border-right: 0; }
.accounts tr:nth-child(6) > * { height: 38px; border-bottom-width: 4px; }
.accounts .total > * { height: 34px; border-bottom: 0; }
.transactions tr:last-child > * { height: 33px; border-bottom: 0; }
p { display: flex; justify-content: space-between; }
td.start { text-align: right; font-weight: 700; }

/* Comment note lies over the tables */
.note { position: absolute; left: 522px; top: 733px; filter: drop-shadow(2px 4px 5px rgba(0,0,0,.5)); }
.note text { font: bold 24px "DejaVu Sans Condensed", "DejaVu Sans", sans-serif; fill: #444; }

/* Status bar */
.status { height: 29px; display: flex; border-top: 1px solid #cfcfcf; }
.zoom, .pageview { background: linear-gradient(#fff, #eaeaea); border-right: 2px solid #a9a9a9; border-top: 1px solid #a9a9a9; display: flex; align-items: center; font-size: 21px; }
.zoom { width: 124px; padding: 0 12px 0 19px; justify-content: space-between; fill: #444; }
.zoom span { line-height: 24px; }
.pageview { width: 41px; justify-content: center; }
.hscroll { flex: 1; background: linear-gradient(#efefef, #fbfbfb 40%, #f7f7f7); }
```
